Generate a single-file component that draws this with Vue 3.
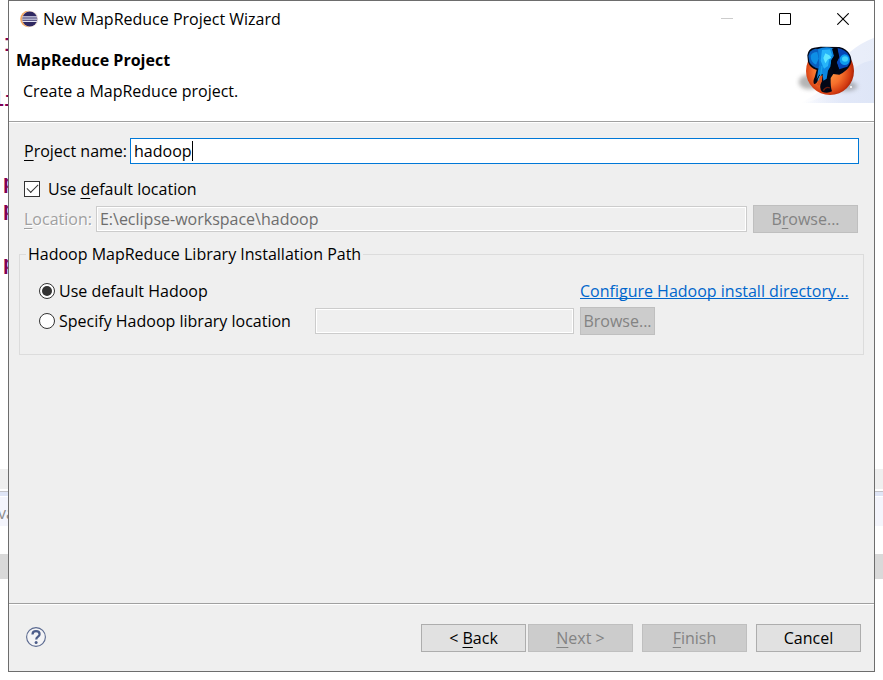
<script setup>
import { ref, onMounted, watch } from 'vue'

const projectName = ref('hadoop')
const useDefaultLocation = ref(true)
const location = ref('E:\\eclipse-workspace\\hadoop')
const hadoopSource = ref('default')
const libraryPath = ref('')

const nameInput = ref(null)
const caretLeft = ref(0)

// Keeps the drawn caret at the end of the typed project name.
function placeCaret() {
  const style = getComputedStyle(nameInput.value)
  const ctx = document.createElement('canvas').getContext('2d')
  ctx.font = `${style.fontSize} ${style.fontFamily}`
  caretLeft.value = Math.round(ctx.measureText(projectName.value).width) + 4
}

onMounted(placeCaret)
watch(projectName, placeCaret)
</script>

<template>
  <div class="page">
    <div class="backdrop" aria-hidden="true">
      <div class="code">
        <span class="code-line first">:I</span>
        <span class="code-line second">li</span>
        <span class="code-line indent third">p</span>
        <span class="code-line indent">p</span>
        <span class="code-line indent fourth">p</span>
      </div>
      <div class="scroll-strip"></div>
      <div class="tab-strip">va</div>
      <div class="selected-strip"></div>
    </div>

    <main class="dialog">
      <div class="titlebar">
        <svg class="app-icon" viewBox="0 0 18 18">
          <circle cx="8.4" cy="9" r="8.2" fill="#f3a862" />
          <circle cx="10.4" cy="9" r="8" fill="#f4e6dc" />
          <circle cx="9.8" cy="9" r="7.5" fill="#2f2861" />
          <path d="M2.4 6.9h14.8M2.2 9.1h15.2M2.4 11.3h14.8" stroke="#e0e0f0" stroke-width="1.2" />
        </svg>
        <span class="window-title">New MapReduce Project Wizard</span>
        <div class="window-controls">
          <button type="button" aria-label="Minimize" disabled>
            <svg viewBox="0 0 12 12"><path d="M0 5.5h12" stroke="#cccccc" /></svg>
          </button>
          <button type="button" aria-label="Maximize">
            <svg viewBox="0 0 12 12"><path d="M.5.5h11v11H.5z" fill="none" stroke="#000" /></svg>
          </button>
          <button type="button" aria-label="Close">
            <svg viewBox="0 0 12 12"><path d="M.3.3l11.4 11.4M11.7.3L.3 11.7" stroke="#000" stroke-width="1.1" /></svg>
          </button>
        </div>
      </div>

      <header class="banner">
        <div class="banner-text">
          <h1>MapReduce Project</h1>
          <p>Create a MapReduce project.</p>
        </div>
        <svg class="banner-art" viewBox="45 105 237 204">
          <defs>
            <radialGradient id="ball" cx="0.45" cy="0.5" r="0.6">
              <stop offset="0" stop-color="#ffa24a" />
              <stop offset="0.5" stop-color="#f6702c" />
              <stop offset="0.8" stop-color="#d23a10" />
              <stop offset="1" stop-color="#8e1402" />
            </radialGradient>
            <linearGradient id="swoosh" x1="0" x2="1">
              <stop offset="0" stop-color="#dfe6f8" stop-opacity="0" />
              <stop offset="0.6" stop-color="#dfe6f8" />
              <stop offset="1" stop-color="#dce4f6" />
            </linearGradient>
            <filter id="soft" x="-40%" y="-40%" width="180%" height="180%"><feGaussianBlur stdDeviation="6" /></filter>
            <filter id="smooth" x="-20%" y="-20%" width="140%" height="140%"><feGaussianBlur stdDeviation="2" /></filter>
          </defs>
          <path d="M282 113C226 136 186 168 168 216C150 260 100 288 62 309H282z" fill="url(#swoosh)" opacity=".65" />
          <path d="M282 179C240 188 220 202 200 230C170 268 120 300 70 309H282z" fill="url(#swoosh)" opacity=".8" />
          <ellipse cx="88" cy="246" rx="32" ry="22" fill="#777" opacity=".55" filter="url(#soft)" />
          <ellipse cx="198" cy="259" rx="34" ry="15" fill="#777" opacity=".5" filter="url(#soft)" />
          <circle cx="150" cy="213" r="72" fill="url(#ball)" />
          <g transform="translate(72 132)">
            <!-- outline of head, ears and trunk -->
            <path d="M10 34Q12 14 30 11L50 8L106 9Q128 14 138 32Q146 48 139 62Q130 80 106 92L88 90L80 102Q79 128 84 142Q70 150 54 143Q44 132 52 112L54 98L46 96Q40 122 30 120Q26 112 32 100L38 78Q18 72 12 54z" fill="#020716" />
            <!-- left ear -->
            <path d="M13 36Q16 18 34 14L50 16L52 50L44 74Q24 70 16 54z" fill="#0a5fc0" />
            <path d="M20 36Q24 24 40 24L44 44L36 62Q20 56 20 36z" fill="#0f8fe6" filter="url(#smooth)" />
            <!-- forehead, face and trunk -->
            <path d="M42 15Q64 6 88 13L90 36L82 48L80 66L72 80L68 104L58 110L56 90L46 92L38 106L42 80L46 62z" fill="#0c86e2" />
            <path d="M54 18L78 16L84 34L76 46L72 66L60 74L50 50z" fill="#26b4fa" filter="url(#smooth)" />
            <path d="M64 28L76 34L82 42L72 46L64 58L58 42z" fill="#5fe6ff" filter="url(#smooth)" />
            <path d="M54 66L50 94L42 110" fill="none" stroke="#19a5ea" stroke-width="4" filter="url(#smooth)" />
            <!-- right ear -->
            <path d="M100 12Q126 16 136 36Q142 56 130 68L106 76L98 56L104 40z" fill="#0646b8" />
            <ellipse cx="122" cy="47" rx="15" ry="16" fill="#0c9cf0" filter="url(#smooth)" />
            <ellipse cx="123" cy="45" rx="9" ry="8" fill="#3fd2fa" filter="url(#smooth)" />
            <path d="M84 14l6 22-8 14-2 16 10 22 14-14-6-20 8-14-6-28z" fill="#01040f" />
            <!-- gap between tusk and trunk -->
            <path d="M49 96L56 94L53 114L45 126L38 122z" fill="#d9531f" />
            <path d="M58 140Q66 126 78 132" fill="none" stroke="#6b1b0b" stroke-width="4" />
          </g>
          <circle cx="213" cy="261" r="3" fill="#fff" />
        </svg>
      </header>

      <form class="content" @submit.prevent>
        <div class="row name-row">
          <label for="project-name"><u>P</u>roject name:</label>
          <div class="name-box">
            <input id="project-name" ref="nameInput" v-model="projectName" class="field active" type="text" spellcheck="false" />
            <span class="caret" :style="{ left: caretLeft + 'px' }"></span>
          </div>
        </div>

        <label class="choice check">
          <input v-model="useDefaultLocation" type="checkbox" />
          <span>Use <u>d</u>efault location</span>
        </label>

        <div class="row location-row">
          <label for="location" class="dim"><u>L</u>ocation:</label>
          <input id="location" v-model="location" class="field" type="text" :disabled="useDefaultLocation" />
          <button type="button" class="btn wide" :disabled="useDefaultLocation">B<u>r</u>owse...</button>
        </div>

        <fieldset class="group">
          <legend>Hadoop MapReduce Library Installation Path</legend>
          <div class="group-grid">
            <label class="choice">
              <input v-model="hadoopSource" type="radio" name="source" value="default" />
              <span>Use default Hadoop</span>
            </label>
            <a class="configure" href="#">Configure Hadoop install directory...</a>
            <label class="choice">
              <input v-model="hadoopSource" type="radio" name="source" value="custom" />
              <span>Specify Hadoop library location</span>
            </label>
            <input v-model="libraryPath" class="field" type="text" aria-label="Hadoop library location" :disabled="hadoopSource === 'default'" />
            <button type="button" class="btn small" :disabled="hadoopSource === 'default'">Browse...</button>
          </div>
        </fieldset>
      </form>

      <footer class="actions">
        <button type="button" class="help" aria-label="Help">
          <svg viewBox="0 0 20 20">
            <circle cx="10" cy="10" r="9.4" fill="#f4f4f6" stroke="#5b6a90" stroke-width="1.1" />
            <path d="M6.5 7.5C6.5 5 8 4.2 10 4.2S13.6 5.3 13.6 7.2C13.6 9.6 10.2 9.6 10.2 12.5" fill="none" stroke="#4d5d89" stroke-width="2.2" />
            <circle cx="10.1" cy="15.4" r="1.5" fill="#4d5d89" />
          </svg>
        </button>
        <div class="nav">
          <button type="button" class="btn wide">&lt; <u>B</u>ack</button>
          <button type="button" class="btn wide" disabled><u>N</u>ext &gt;</button>
        </div>
        <button type="button" class="btn wide" disabled><u>F</u>inish</button>
        <button type="button" class="btn wide">Cancel</button>
      </footer>
    </main>
  </div>
</template>

<style>
body {
  background: #fff;
}
</style>

<style scoped>
* {
  box-sizing: border-box;
}

.page {
  position: relative;
  display: flex;
  min-height: 100vh;
  padding: 0 8px 8px;
  overflow: hidden;
  font: 16px/20px "Open Sans", "Noto Sans", sans-serif;
  color: #000;
}

/* Editor window that lies behind the dialog */
.backdrop {
  position: absolute;
  inset: 0;
}

.code {
  display: flex;
  flex-direction: column;
  height: 469px;
  color: #7f0055;
  font: bold 20px/27px "Liberation Mono", monospace;
}

.code-line.first {
  margin-top: 32px;
  margin-left: -8px;
}

.code-line.second {
  margin-top: 28px;
  margin-left: -8px;
}

.code-line.indent {
  padding-left: 3px;
}

.code-line.third {
  margin-top: 56px;
}

.code-line.fourth {
  margin-top: 27px;
}

.scroll-strip {
  height: 20px;
  background: #efefef;
}

.tab-strip {
  height: 35px;
  margin-top: 2px;
  margin-bottom: 28px;
  border-top: 1px solid #c2c2c6;
  background: linear-gradient(#dfe5f6 4px, #fff 4px, #fff 5px, #f4f5fc 5px);
  color: #8c8c8c;
  line-height: 42px;
  text-indent: -2px;
}

.selected-strip {
  height: 25px;
  background: #d9d9d9;
}

.dialog {
  position: relative;
  display: flex;
  flex: 1;
  flex-direction: column;
  min-width: 0;
  border: 1px solid #6d6d6d;
  background: #efefef;
}

.titlebar {
  display: flex;
  align-items: center;
  height: 36px;
  padding: 0 2px 0 11px;
  background: #fff;
}

.app-icon {
  width: 18px;
  height: 18px;
  margin-right: 5px;
}

.window-controls {
  display: flex;
  margin-left: auto;
}

.window-controls button {
  width: 58px;
  height: 36px;
  padding: 0;
  border: 0;
  background: none;
}

.window-controls svg {
  display: block;
  width: 12px;
  height: 12px;
  margin: 0 auto;
}

.banner {
  display: flex;
  justify-content: space-between;
  align-items: flex-start;
  height: 84px;
  background: #fff;
}

.banner-text {
  padding: 13px 7px;
}

h1 {
  margin: 0;
  font-size: 16px;
  line-height: 20px;
}

.banner-text p {
  margin: 11px 7px 0;
}

.banner-art {
  width: 79px;
  height: 68px;
  margin-top: -2px;
}

.content {
  flex: 1;
  padding: 16px 10px;
  border-top: 1px solid #a0a0a0;
  border-bottom: 1px solid #a0a0a0;
  box-shadow: inset 0 1px #fff;
}

.row {
  display: flex;
  align-items: center;
  padding: 0 5px;
}

.name-row {
  gap: 3px;
}

.name-box {
  position: relative;
  flex: 1;
}

.caret {
  position: absolute;
  top: 3px;
  width: 1px;
  height: 20px;
  background: #000;
}

.field {
  width: 100%;
  min-width: 0;
  height: 26px;
  padding: 0 3px;
  border: 1px solid #7a7a7a;
  border-radius: 0;
  outline: 0;
  background: #fff;
  color: #000;
  font: inherit;
}

.field.active {
  display: block;
  border-color: #0078d7;
}

.field:disabled {
  border-color: #cccccc;
  background: #efefef;
  box-shadow: inset 0 0 0 1px #fff;
  color: #6d6d6d;
}

u {
  text-decoration: underline;
  text-decoration-thickness: 1px;
  text-decoration-skip-ink: none;
  text-underline-offset: 3px;
}

.choice {
  display: flex;
  align-items: center;
  gap: 4px;
}

.check {
  gap: 8px;
  padding: 0 5px;
  margin-top: 15px;
}

.choice input {
  display: grid;
  flex: none;
  place-items: center;
  width: 16px;
  height: 16px;
  margin: 0;
  border: 1px solid #333;
  background: #fff;
  appearance: none;
}

.choice input[type="radio"] {
  border-radius: 50%;
}

.choice input[type="radio"]:checked::before {
  width: 10px;
  height: 10px;
  border-radius: 50%;
  background: #333;
  content: "";
}

.choice input[type="checkbox"]:checked::before {
  width: 10px;
  height: 5px;
  border: solid #333;
  border-width: 0 0 1px 1px;
  content: "";
  transform: translateY(-2px) rotate(-45deg);
}

.location-row {
  gap: 6px;
  margin-top: 6px;
  padding-right: 6px;
}

.location-row .field {
  flex: 1;
}

.dim {
  margin-right: -2px;
  color: #a0a0a0;
  text-shadow: 1px 1px #fff;
}

.btn {
  flex: none;
  height: 28px;
  padding: 0;
  border: 1px solid #adadad;
  background: #e1e1e1;
  color: #000;
  font: inherit;
}

.btn:disabled {
  border-color: #bfbfbf;
  background: #cccccc;
  color: #838383;
}

.wide {
  width: 105px;
}

.small {
  width: 75px;
}

.group {
  min-width: 0;
  margin: 11px 0 0;
  padding: 0 19px 19px;
  border: 1px solid #dcdcdc;
}

legend {
  margin-left: -13px;
  padding: 0 2px;
}

.group-grid {
  display: grid;
  grid-template-columns: 270px 1fr 264px;
  align-items: center;
  gap: 2px 6px;
  padding-top: 13px;
}

.group-grid > * {
  min-height: 28px;
}

.group-grid .field {
  min-height: 26px;
}

.configure {
  grid-column: 3;
  color: #0066cc;
  line-height: 28px;
  white-space: nowrap;
  text-decoration-thickness: 1px;
  text-decoration-skip-ink: none;
}

.actions {
  display: flex;
  align-items: flex-start;
  gap: 9px;
  height: 67px;
  padding: 19px 13px 0 17px;
  border-top: 1px solid #fff;
}

.help {
  width: 20px;
  height: 20px;
  margin-top: 3px;
  padding: 0;
  border: 0;
  background: none;
}

.help svg {
  display: block;
}

.nav {
  display: flex;
  gap: 2px;
  margin-left: auto;
}
</style>
